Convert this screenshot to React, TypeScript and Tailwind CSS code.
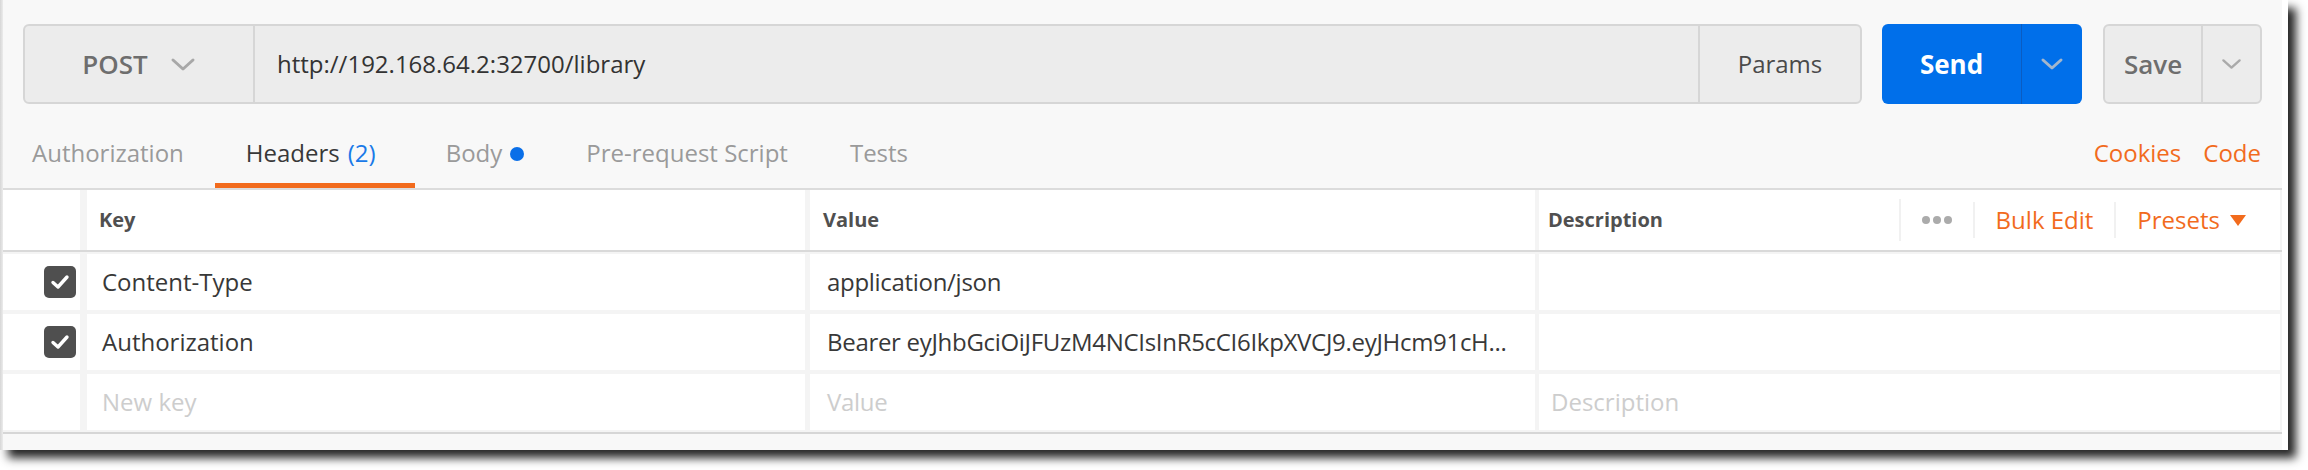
import React from "react";

const ORANGE = "#f26b1d";

function Chevron({ w, h, color, sw }: { w: number; h: number; color: string; sw: number }) {
  return (
    <svg width={w} height={h} viewBox={`0 0 ${w} ${h}`} fill="none">
      <polyline
        points={`${sw},${sw} ${w / 2},${h - sw} ${w - sw},${sw}`}
        stroke={color}
        strokeWidth={sw}
        strokeLinecap="round"
        strokeLinejoin="round"
      />
    </svg>
  );
}

function Checkbox() {
  return (
    <div className="w-[32px] h-[32px] rounded-[5px] bg-[#4f4f4f] flex items-center justify-center">
      <svg width="20" height="16" viewBox="0 0 20 16" fill="none">
        <polyline points="3,8.5 8,13 17,3" stroke="#ffffff" strokeWidth="3.4" strokeLinecap="round" strokeLinejoin="round" />
      </svg>
    </div>
  );
}

function Row({ k, v, d, placeholder }: { k: string; v: string; d: string; placeholder?: boolean }) {
  const txt = placeholder ? "text-[#cdcdcd]" : "text-[#383838]";
  return (
    <div className="grid grid-cols-[77px_725px_730px_745px] h-[56px]">
      <div className="bg-white flex items-center justify-end pr-[4px]">
        {!placeholder && <Checkbox />}
      </div>
      <div className={`ml-[7px] bg-white flex items-center pl-[15px] text-[24px] ${txt}`}>
        <span className="whitespace-nowrap">{k}</span>
      </div>
      <div className={`ml-[5px] bg-white flex items-center text-[24px] ${txt}`}>
        <span className="ml-[17px] whitespace-nowrap tracking-[-0.3px]">{v}</span>
      </div>
      <div className={`ml-[4px] bg-white flex items-center pl-[12px] text-[24px] ${txt}`}>
        <span className="whitespace-nowrap">{d}</span>
      </div>
    </div>
  );
}

export default function App() {
  return (
    <div
      className="w-[2308px] h-[470px] bg-white overflow-hidden"
      style={{ fontFamily: '"Open Sans", "Noto Sans", sans-serif' }}
    >
      <div className="w-[2288px] h-[450px] bg-white flex shadow-[8px_8px_9px_rgba(0,0,0,0.85)]">
        <div className="w-[3px] shrink-0 bg-gradient-to-r from-[#d6d6d6] to-[#ececec]" />
        <div className="w-[2279px] shrink-0 bg-[#f8f8f8] flex flex-col">
          {/* Request bar */}
          <div className="flex pt-[24px] pl-[20px] pr-[20px] h-[104px]">
            <div className="flex-1 flex border-2 border-[#d6d6d6] rounded-[6px] bg-[#ececec]">
              <div className="w-[230px] border-r-2 border-[#d6d6d6] flex items-center justify-center gap-[22px]">
                <span className="text-[26px] font-semibold text-[#6e6e6e]">POST</span>
                <Chevron w={26} h={15} color="#a8a8a8" sw={3} />
              </div>
              <div className="flex-1 flex items-center pl-[22px] text-[24px] text-[#333333]">
                http://192.168.64.2:32700/library
              </div>
              <div className="w-[162px] border-l-2 border-[#d6d6d6] flex items-center justify-center text-[24px] text-[#4a4a4a]">
                Params
              </div>
            </div>
            <div className="ml-[20px] w-[200px] rounded-[6px] bg-[#006fea] flex">
              <div className="w-[139px] flex items-center justify-center text-[26px] font-bold text-white">Send</div>
              <div className="flex-1 border-l border-[#0a5cc2] flex items-center justify-center">
                <Chevron w={24} h={14} color="#a3b6cc" sw={3} />
              </div>
            </div>
            <div className="ml-[21px] w-[159px] border-2 border-[#d6d6d6] rounded-[6px] bg-[#ececec] flex">
              <div className="w-[96px] flex items-center justify-center text-[26px] font-semibold text-[#6e6e6e]">Save</div>
              <div className="flex-1 border-l-2 border-[#d6d6d6] flex items-center justify-center">
                <Chevron w={21} h={12} color="#aaaaaa" sw={2.4} />
              </div>
            </div>
          </div>

          {/* Tabs */}
          <div className="flex h-[84px] pr-[21px]">
            <div className="flex">
              <div className="pl-[29px] pr-[31px] pt-[19px] flex items-center border-b-[5px] border-transparent text-[24px] text-[#9a9a9a]">Authorization</div>
              <div className="pl-[31px] pr-[39px] pt-[19px] flex items-center border-b-[5px] border-[#f26b1d] text-[24px] text-[#383838]">
                Headers <span className="ml-[8px] text-[#1a7ae8]">(2)</span>
              </div>
              <div className="px-[31px] pt-[19px] flex items-center border-b-[5px] border-transparent text-[24px] text-[#9a9a9a]">
                Body <span className="ml-[8px] w-[14px] h-[14px] rounded-full bg-[#0a6fe8] mt-[2px]" />
              </div>
              <div className="px-[31px] pt-[19px] flex items-center border-b-[5px] border-transparent text-[24px] text-[#9a9a9a]">Pre-request Script</div>
              <div className="px-[31px] pt-[19px] flex items-center border-b-[5px] border-transparent text-[24px] text-[#9a9a9a]">Tests</div>
            </div>
            <div className="flex-1" />
            <div className="flex items-center gap-[22px] pt-[19px] pb-[5px] text-[24px]" style={{ color: ORANGE }}>
              <span>Cookies</span>
              <span>Code</span>
            </div>
          </div>
          <div className="h-[2px] bg-[#dcdcdc]" />

          {/* Table header */}
          <div className="grid grid-cols-[77px_725px_730px_745px] h-[60px] bg-[#f4f4f4]">
            <div className="bg-white" />
            <div className="ml-[7px] bg-white flex items-center pl-[12px] text-[20px] font-bold text-[#505050]">Key</div>
            <div className="ml-[5px] bg-white flex items-center pl-[13px] text-[20px] font-bold text-[#505050]">Value</div>
            <div className="ml-[4px] bg-white flex items-center pl-[9px]">
              <span className="text-[20px] font-bold text-[#505050]">Description</span>
              <div className="flex-1" />
              <div className="w-[2px] h-[42px] bg-[#f1f1f1]" />
              <div className="px-[21px] flex items-center gap-[3px]">
                <span className="w-[8px] h-[8px] rounded-full bg-[#ababab]" />
                <span className="w-[8px] h-[8px] rounded-full bg-[#ababab]" />
                <span className="w-[8px] h-[8px] rounded-full bg-[#ababab]" />
              </div>
              <div className="w-[2px] h-[36px] bg-[#f1f1f1]" />
              <div className="px-[21px] text-[24px]" style={{ color: ORANGE }}>Bulk Edit</div>
              <div className="w-[2px] h-[36px] bg-[#f1f1f1]" />
              <div className="pl-[21px] pr-[34px] flex items-center gap-[10px] text-[24px]" style={{ color: ORANGE }}>
                <span>Presets</span>
                <svg width="16" height="11" viewBox="0 0 16 11">
                  <polygon points="0,0 16,0 8,11" fill={ORANGE} />
                </svg>
              </div>
            </div>
          </div>
          <div className="h-[2px] bg-[#d9d9d9]" />

          {/* Rows */}
          <div className="flex flex-col gap-[4px] py-[2px] bg-[#f4f4f4]">
            <Row k="Content-Type" v="application/json" d="" />
            <Row k="Authorization" v="Bearer eyJhbGciOiJFUzM4NCIsInR5cCI6IkpXVCJ9.eyJHcm91cH..." d="" />
            <Row k="New key" v="Value" d="Description" placeholder />
          </div>
          <div className="h-[2px] bg-[#d6d6d6]" />
          <div className="flex-1" />
        </div>
      </div>
    </div>
  );
}
